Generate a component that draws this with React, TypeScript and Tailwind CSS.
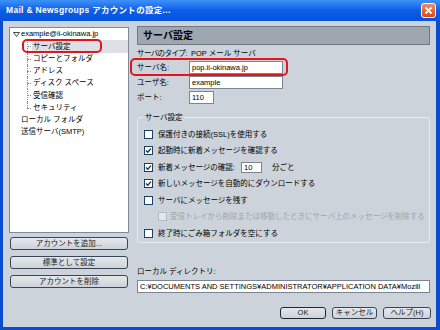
import React from 'react';

// ツリーの子項目 (アカウント配下)
const treeChildren = ['サーバ設定', 'コピーとフォルダ', 'アドレス', 'ディスク スペース', '受信確認', 'セキュリティ'];

const options = [
  { label: '保護付きの接続(SSL)を使用する', checked: false },
  { label: '起動時に新着メッセージを確認する', checked: true },
  { label: 'interval', checked: true },
  { label: '新しいメッセージを自動的にダウンロードする', checked: true },
  { label: 'サーバにメッセージを残す', checked: false },
  { label: '受信トレイから削除または移動したときにサーバ上のメッセージを削除する', checked: false, disabled: true },
  { label: '終了時にごみ箱フォルダを空にする', checked: false },
];

function Check({ checked = false, disabled = false }: { checked?: boolean; disabled?: boolean }) {
  return (
    <span
      className={`w-[9px] h-[9px] shrink-0 border flex items-center justify-center ${
        disabled ? 'border-[#b4bac2] bg-[#e4e8ec]' : 'border-[#1c3f66] bg-white'
      }`}
    >
      {checked && (
        <svg width="7" height="7" viewBox="0 0 7 7">
          <path d="M1 3.4 L2.8 5.2 L6 1.6" fill="none" stroke="#1f3a1f" strokeWidth="1.4" />
        </svg>
      )}
    </span>
  );
}

function XpButton({ label, isDefault = false, className = '' }: { label: string; isDefault?: boolean; className?: string }) {
  return (
    <div
      className={`flex items-center justify-center rounded-[3px] bg-linear-to-b from-[#e4e8ec] to-[#cdd3da] text-[#1a1a1a] ${
        isDefault ? 'border-[1.5px] border-[#1d2a36]' : 'border border-[#3a4654]'
      } ${className}`}
    >
      {label}
    </div>
  );
}

export default function App() {
  return (
    <div className="w-[440px] h-[330px] bg-[#0a4cd0] flex flex-col overflow-hidden font-['Liberation_Sans','Noto_Sans_CJK_JP',sans-serif] text-[7.5px] leading-none text-black">
      {/* タイトルバー */}
      <div className="h-[21px] shrink-0 bg-linear-to-b from-[#3f91f8] via-[#0b5de8] to-[#0653dc] flex items-center pl-[6px] pr-[4px]">
        <span className="text-white font-bold text-[8.5px] tracking-[0.3px]">Mail &amp; Newsgroups アカウントの設定...</span>
        <div className="ml-auto w-[15px] h-[15px] rounded-[3px] border border-white bg-linear-to-b from-[#f08a5e] to-[#d8461c] flex items-center justify-center">
          <svg width="9" height="9" viewBox="0 0 9 9">
            <path d="M1.5 1.5 L7.5 7.5 M7.5 1.5 L1.5 7.5" stroke="white" strokeWidth="1.8" />
          </svg>
        </div>
      </div>

      {/* 本体 */}
      <div className="flex-1 ml-[3px] mr-[4px] mb-[3px] bg-[#ccd3db] flex pl-[6px] pr-[6px]">
        {/* 左カラム */}
        <div className="w-[120px] pt-[6px] flex flex-col">
          <div className="h-[206px] bg-white border border-[#7d8a98] flex flex-col">
            <div className="h-[12.25px] flex items-center pl-[3px] gap-[1px]">
              <svg width="7" height="5" viewBox="0 0 7 5">
                <path d="M0.5 0.5 L6.5 0.5 L3.5 4.5 Z" fill="none" stroke="#333" strokeWidth="0.9" />
              </svg>
              <span>example@ii-okinawa.jp</span>
            </div>
            {treeChildren.map((name, i) => {
              const last = i === treeChildren.length - 1;
              const selected = i === 0;
              return (
                <div key={name} className="h-[12.25px] flex items-stretch">
                  <span className="w-[17px] shrink-0" />
                  <span className="w-[5px] shrink-0 relative">
                    <span
                      className={`absolute left-0 top-0 border-l border-dotted border-[#8a8a8a] ${last ? 'h-1/2' : 'h-full'}`}
                    />
                    <span className="absolute left-0 top-1/2 w-[4px] border-t border-dotted border-[#8a8a8a]" />
                  </span>
                  <span className={`flex-1 flex items-center pl-[1px] relative ${selected ? 'bg-[#dde1e6]' : ''}`}>
                    {name}
                    {selected && (
                      <span className="absolute -left-[10px] top-[-1px] w-[80px] h-[14px] border-2 border-[#e3141c] rounded-[5px]" />
                    )}
                  </span>
                </div>
              );
            })}
            <div className="h-[12.25px] flex items-center pl-[11px]">ローカル フォルダ</div>
            <div className="h-[12.25px] flex items-center pl-[11px]">送信サーバ(SMTP)</div>
          </div>
          <div className="mt-[4px] px-[1px] flex flex-col gap-[6px]">
            <XpButton label="アカウントを追加..." className="h-[13px]" />
            <XpButton label="標準として設定" className="h-[13px]" />
            <XpButton label="アカウントを削除" className="h-[13px]" />
          </div>
        </div>

        {/* 右カラム */}
        <div className="w-[293px] ml-[8px] pt-[5px] flex flex-col">
          <div className="h-[19px] bg-[#9ea6b0] border border-[#6f7883] flex items-center pl-[5px]">
            <span className="font-bold text-[10px]">サーバ設定</span>
          </div>

          <div className="mt-[3px] h-[12px] flex items-center whitespace-nowrap">
            <span className="w-[54px] shrink-0 tracking-[-0.6px]">サーバのタイプ:</span>
            <span>POP メール サーバ</span>
          </div>

          <div className="mt-[1px] h-[13px] flex items-center relative w-fit">
            <span className="w-[52px]">サーバ名:</span>
            <div className="w-[94px] h-[13px] bg-white border border-[#7a8591] flex items-center pl-[2px]">pop.ii-okinawa.jp</div>
            <span className="absolute -left-[7px] -right-[5px] -top-[3px] -bottom-[2px] border-2 border-[#e3141c] rounded-[5px]" />
          </div>

          <div className="mt-[2px] h-[13px] flex items-center">
            <span className="w-[52px]">ユーザ名:</span>
            <div className="w-[94px] h-[13px] bg-white border border-[#7a8591] flex items-center pl-[2px]">example</div>
          </div>

          <div className="mt-[2px] h-[13px] flex items-center">
            <span className="w-[52px]">ポート:</span>
            <div className="w-[25px] h-[13px] bg-white border border-[#7a8591] flex items-center pl-[2px]">110</div>
          </div>

          {/* サーバ設定グループ */}
          <div className="mt-[13px] h-[126px] border border-[#e8ecf0] rounded-[3px] relative pt-[8px] pl-[6px]">
            <span className="absolute -top-[4px] left-[5px] px-[2px] bg-[#ccd3db]">サーバ設定</span>
            {options.map((o) => (
              <div
                key={o.label}
                className={`h-[16.5px] flex items-center ${o.disabled ? 'pl-[14px] gap-[3px] text-[#9ea5ad]' : 'gap-[5px]'}`}
              >
                <Check checked={o.checked} disabled={o.disabled} />
                {o.label === 'interval' ? (
                  <>
                    <span className="w-[78px]">新着メッセージの確認:</span>
                    <div className="w-[21px] h-[11px] bg-white border border-[#7a8591] flex items-center pl-[2px]">10</div>
                    <span className="ml-[5px]">分ごと</span>
                  </>
                ) : (
                  <span>{o.label}</span>
                )}
              </div>
            ))}
          </div>

          <div className="mt-[23px] h-[12px] flex items-center">ローカル ディレクトリ:</div>
          <div className="mt-[2px] h-[13px] bg-white border border-[#7a8591] flex items-center pl-[2px] overflow-hidden whitespace-nowrap">
            C:¥DOCUMENTS AND SETTINGS¥ADMINISTRATOR¥APPLICATION DATA¥Mozill
          </div>

          <div className="mt-[14px] flex justify-end gap-[6px] mr-[-1px]">
            <XpButton label="OK" isDefault className="w-[46px] h-[12px]" />
            <XpButton label="キャンセル" className="w-[45px] h-[12px]" />
            <XpButton label="ヘルプ(H)" className="w-[48px] h-[12px]" />
          </div>
        </div>
      </div>
    </div>
  );
}
